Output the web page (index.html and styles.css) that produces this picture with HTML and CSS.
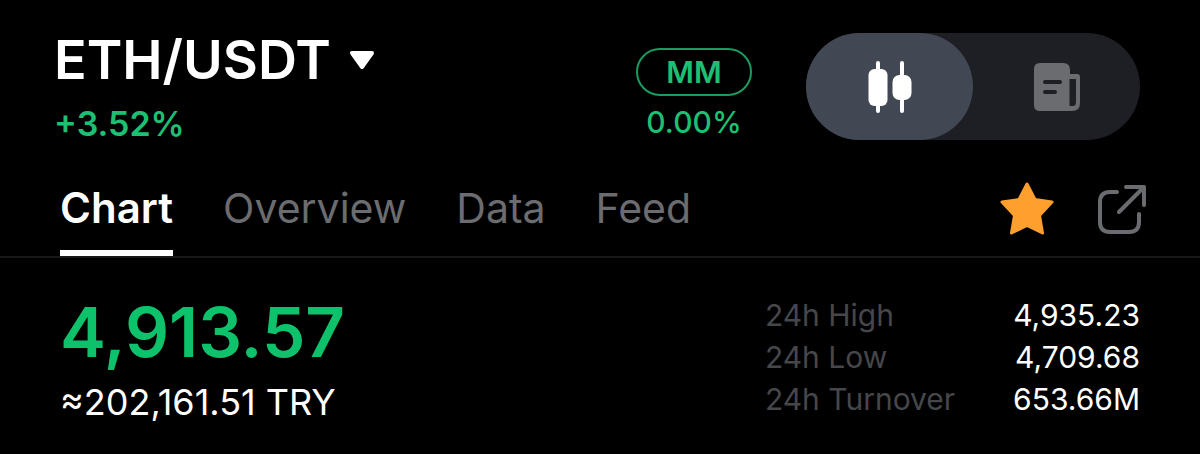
FILE: index.html
```html
<!DOCTYPE html>
<html lang="en">
<head>
<meta charset="utf-8">
<meta name="viewport" content="width=device-width, initial-scale=1">
<title>ETH/USDT</title>
<link rel="stylesheet" href="styles.css">
</head>
<body>
<header class="header">
  <div class="pair">
    <button class="pair-select" type="button">
      <span>ETH/USDT</span>
      <svg class="caret" viewBox="0 0 26 20" aria-hidden="true"><path d="M3 3h20L13 17z"/></svg>
    </button>
    <span class="change">+3.52%</span>
  </div>
  <div class="maker">
    <span class="badge">MM</span>
    <span class="fee">0.00%</span>
  </div>
  <div class="switch">
    <button class="switch-item switch-active" type="button" aria-label="Chart view" aria-pressed="true">
      <svg class="icon-candles" viewBox="0 0 44 54" aria-hidden="true">
        <path d="M10 3v48M34 3v48"/>
        <rect x="0.500" y="9" width="19" height="37" rx="6"/>
        <rect x="24.500" y="15" width="19" height="25" rx="7"/>
      </svg>
    </button>
    <button class="switch-item" type="button" aria-label="News view" aria-pressed="false">
      <svg class="icon-news" viewBox="0 0 48 50" aria-hidden="true">
        <path class="news-body" d="M7 1h23q7 0 7 7v4h7q3 0 3 3v26q0 8-8 8H7q-6 0-6-6V7q0-6 6-6z"/>
        <path class="news-gap" d="M36.500 17h6.500v23q0 4-3 4h-3.500z"/>
        <path class="news-lines" d="M12 20h15M12 30h10"/>
      </svg>
    </button>
  </div>
</header>
<div class="tabbar">
  <nav class="tabs">
    <a class="tab tab-active" href="#chart" aria-current="page">Chart</a>
    <a class="tab" href="#overview">Overview</a>
    <a class="tab" href="#data">Data</a>
    <a class="tab" href="#feed">Feed</a>
  </nav>
  <div class="actions">
    <button class="action" type="button" aria-label="Favorite">
      <svg class="icon-star" viewBox="0 0 56 54" aria-hidden="true"><path d="M28 3l8 15.500 17 2.500-12.500 13.500 3 17.500-15.500-7.500-15.500 7.500 3-17.500L3 21l17-2.500z"/></svg>
    </button>
    <button class="action" type="button" aria-label="Share">
      <svg class="icon-share" viewBox="0 0 50 50" aria-hidden="true"><path d="M20 9H13Q3 9 3 19v20q0 10 10 10h19q10 0 10-10V31M22 29L47 4M29 4h18v18"/></svg>
    </button>
  </div>
</div>
<main class="summary">
  <div class="quote">
    <strong class="price">4,913.57</strong>
    <span class="fiat">≈202,161.51 TRY</span>
  </div>
  <dl class="stats">
    <dt>24h High</dt><dd>4,935.23</dd>
    <dt>24h Low</dt><dd>4,709.68</dd>
    <dt>24h Turnover</dt><dd>653.66M</dd>
  </dl>
</main>
</body>
</html>
```
FILE: styles.css
```css
* {
  box-sizing: border-box;
}

body {
  margin: 0;
  background: #000;
  color: #fff;
  font-family: Inter, "Liberation Sans", sans-serif;
}

button {
  padding: 0;
  border: 0;
  background: none;
  color: inherit;
  font: inherit;
}

svg {
  display: block;
  overflow: visible;
}

.header {
  display: flex;
  align-items: flex-start;
  padding: 32px 60px 0 54px;
}

.pair {
  display: flex;
  flex-direction: column;
  align-items: flex-start;
  margin-right: auto;
}

.pair-select {
  display: flex;
  align-items: center;
  gap: 18px;
  font-size: 54px;
  font-weight: 600;
  line-height: 56px;
}

.caret {
  width: 26px;
  height: 20px;
  fill: #fff;
  stroke: #fff;
  stroke-width: 4;
  stroke-linejoin: round;
}

.change {
  margin-top: 16px;
  color: #1dbf73;
  font-size: 34px;
  font-weight: 600;
  line-height: 40px;
}

.maker {
  display: flex;
  flex-direction: column;
  align-items: center;
  margin: 16px 54px 0 0;
  color: #1dbf73;
  font-weight: 600;
}

.badge {
  width: 116px;
  border: 2px solid #1a9c60;
  border-radius: 24px;
  font-size: 30px;
  line-height: 44px;
  text-align: center;
}

.fee {
  margin-top: 6px;
  font-size: 30px;
  font-weight: 500;
  line-height: 40px;
}

.switch {
  display: flex;
  margin-top: 1px;
  border-radius: 54px;
  background: #1e1f24;
}

.switch-item {
  display: flex;
  align-items: center;
  justify-content: center;
  width: 167px;
  height: 107px;
  border-radius: 54px;
}

.switch-active {
  background: #424853;
}

.icon-candles {
  width: 44px;
  height: 54px;
  fill: #fff;
  stroke: #fff;
  stroke-width: 4;
  stroke-linecap: round;
}

.icon-candles rect {
  stroke: none;
}

.icon-news {
  width: 48px;
  height: 50px;
}

.news-body {
  fill: #6b6c6f;
}

.news-gap {
  fill: #1e1f24;
}

.news-lines {
  fill: none;
  stroke: #1e1f24;
  stroke-width: 4;
  stroke-linecap: round;
}

.tabbar {
  display: flex;
  align-items: flex-start;
  justify-content: space-between;
  margin-top: 36px;
  padding: 0 52px 0 60px;
  border-bottom: 2px solid #17181a;
}

.tabs {
  display: flex;
  gap: 50px;
}

.tab {
  padding: 4px 0 18px;
  border-bottom: 6px solid transparent;
  color: #6b6c6f;
  font-size: 41px;
  line-height: 48px;
  text-decoration: none;
}

.tab-active {
  border-color: #fff;
  color: #fff;
  font-size: 42px;
  font-weight: 600;
}

.actions {
  display: flex;
  align-items: center;
  gap: 42px;
  padding: 1px 1px 0 0;
}

.icon-star {
  width: 56px;
  height: 54px;
  fill: #ff9f2e;
  stroke: #ff9f2e;
  stroke-width: 3;
  stroke-linejoin: round;
}

.icon-share {
  width: 50px;
  height: 50px;
  fill: none;
  stroke: #6b6c6f;
  stroke-width: 4;
  stroke-linecap: round;
  stroke-linejoin: round;
}

.summary {
  display: flex;
  justify-content: space-between;
  padding: 36px 60px 0;
}

.quote {
  display: flex;
  flex-direction: column;
}

.price {
  color: #0ec26c;
  font-size: 69px;
  font-weight: 600;
  line-height: 76px;
}

.fiat {
  margin-top: 12px;
  font-size: 36px;
  line-height: 40px;
}

.stats {
  display: grid;
  grid-template-columns: auto auto;
  align-content: start;
  column-gap: 58px;
  margin: 0;
  font-size: 30px;
  line-height: 42px;
}

.stats dt {
  color: #45474a;
}

.stats dd {
  margin: 0;
  text-align: right;
}
```
